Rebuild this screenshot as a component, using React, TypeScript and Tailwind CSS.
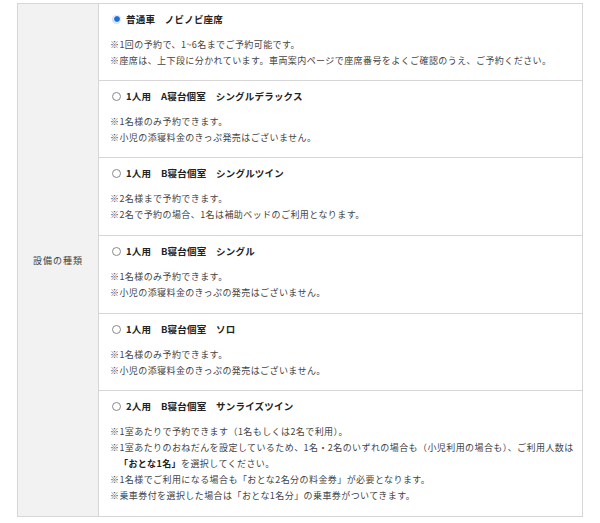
import React from 'react';

type Plan = {
  title: string;
  selected?: boolean;
  notes: React.ReactNode[];
};

const PLANS: Plan[] = [
  {
    title: '普通車　ノビノビ座席',
    selected: true,
    notes: [
      '※1回の予約で、1~6名までご予約可能です。',
      '※座席は、上下段に分かれています。車両案内ページで座席番号をよくご確認のうえ、ご予約ください。',
    ],
  },
  {
    title: '1人用　A寝台個室　シングルデラックス',
    notes: ['※1名様のみ予約できます。', '※小児の添寝料金のきっぷ発売はございません。'],
  },
  {
    title: '1人用　B寝台個室　シングルツイン',
    notes: ['※2名様まで予約できます。', '※2名で予約の場合、1名は補助ベッドのご利用となります。'],
  },
  {
    title: '1人用　B寝台個室　シングル',
    notes: ['※1名様のみ予約できます。', '※小児の添寝料金のきっぷの発売はございません。'],
  },
  {
    title: '1人用　B寝台個室　ソロ',
    notes: ['※1名様のみ予約できます。', '※小児の添寝料金のきっぷの発売はございません。'],
  },
  {
    title: '2人用　B寝台個室　サンライズツイン',
    notes: [
      '※1室あたりで予約できます（1名もしくは2名で利用）。',
      <>
        ※1室あたりのおねだんを設定しているため、1名・2名のいずれの場合も（小児利用の場合も）、ご利用人数は
        <br />
        <b className="font-bold text-[#222]">「おとな1名」</b>を選択してください。
      </>,
      '※1名様でご利用になる場合も「おとな2名分の料金券」が必要となります。',
      '※乗車券付を選択した場合は「おとな1名分」の乗車券がついてきます。',
    ],
  },
];

const Radio = ({ on }: { on?: boolean }) =>
  on ? (
    <span className="w-[9px] h-[9px] rounded-full bg-[#cfe0f7] flex items-center justify-center shrink-0">
      <span className="w-[6px] h-[6px] rounded-full bg-[#1f6fd8] border border-white box-content" />
    </span>
  ) : (
    <span className="w-[9px] h-[9px] rounded-full border border-[#8a8a8a] bg-white shrink-0" />
  );

const App: React.FC = () => {
  return (
    <div
      className="w-[600px] h-[523px] bg-white pt-[3px] pl-[17px] text-[#444]"
      style={{ fontFamily: '"Noto Sans CJK JP", "Noto Sans", sans-serif' }}
    >
      <div className="w-[566px] flex border border-[#d6d6d6]">
        <div className="w-[81px] shrink-0 bg-[#f2f2f2] border-r border-[#d6d6d6] flex items-center justify-center">
          <span className="text-[9px] tracking-[1px] leading-[16px] text-[#444] mt-[2px]">設備の種類</span>
        </div>
        <div className="flex-1 flex flex-col">
          {PLANS.map((p, i) => (
            <div
              key={i}
              className={`pl-[11px] pr-[4px] pt-[7px] ${i < PLANS.length - 1 ? 'border-b border-[#d6d6d6]' : ''} ${i === 2 || i === 3 || i === 5 ? 'pb-[12px]' : 'pb-[11px]'}`}
            >
              <div className="flex items-center gap-[5px] ml-[2px] h-[16px]">
                <Radio on={p.selected} />
                <span className="text-[9.5px] font-bold tracking-[0.2px] text-[#222]">{p.title}</span>
              </div>
              <div className="mt-[10px]">
                {p.notes.map((n, j) => (
                  <p key={j} className="text-[9px] leading-[16px] tracking-[0.42px] pl-[1em] -indent-[1em] whitespace-nowrap">
                    {n}
                  </p>
                ))}
              </div>
            </div>
          ))}
        </div>
      </div>
    </div>
  );
};

export default App;
